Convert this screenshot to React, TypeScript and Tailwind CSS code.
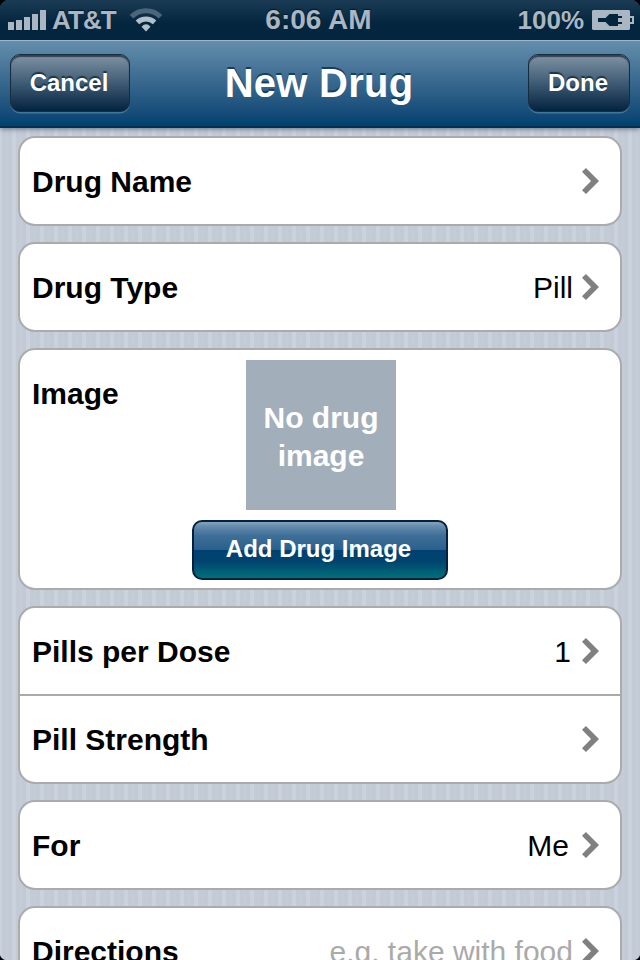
import type { ReactNode } from "react";

function Chevron() {
  return (
    <svg width="18" height="26" viewBox="0 0 18 26" className="ml-2 shrink-0">
      <path d="M1 3.8 L5 0 L18 13 L5 26 L1 22.2 L10 13Z" fill="#808080" />
    </svg>
  );
}

function Card({ children }: { children: ReactNode }) {
  return (
    <section className="w-[604px] shrink-0 divide-y-2 divide-[#ababab] overflow-hidden rounded-[17px] border-2 border-[#ababab] bg-white">
      {children}
    </section>
  );
}

type RowProps = { label: string; value?: string; pad?: string; muted?: boolean };

function Row({ label, value, pad = "", muted }: RowProps) {
  return (
    <div className="flex h-[86px] items-center justify-between pr-[21px] pl-3 not-last:h-[88px]">
      <span className="pt-[2px] text-[30px] leading-[34px] font-bold">{label}</span>
      <div className="flex items-center">
        <span className={`pt-[2px] text-[30px] leading-[34px] ${pad} ${muted ? "text-[#aaaaaa]" : "text-black"}`}>
          {value}
        </span>
        <Chevron />
      </div>
    </div>
  );
}

function BarButton({ children, size }: { children: ReactNode; size: string }) {
  return (
    <button
      className={`${size} h-[58px] rounded-[10px] border border-[#182c3f] bg-linear-to-b from-[#8093a3] via-[#3f5c75] to-[#03233f] pr-[2px] pb-[1px] text-[24px] leading-7 font-bold text-white shadow-[0_1.5px_0_#41769a,inset_0_2px_1px_#33424f] [text-shadow:0_-2px_1px_#1b3346]`}
    >
      {children}
    </button>
  );
}

function Signal() {
  return (
    <svg width="38" height="20" viewBox="0 0 38 20" fill="#aab7c2">
      <path d="M0 12h6v8H0zM8 10h6v10H8zM16 7h6v13h-6zM24 4h6v16h-6zM32 0h6v20h-6z" />
    </svg>
  );
}

function Wifi() {
  return (
    <svg width="32" height="24" viewBox="0 0 32 24" fill="none">
      <path d="M1.5 8.7 A20.5 20.5 0 0 1 30.5 8.7" stroke="#4b667a" strokeWidth="5" />
      <path d="M7.4 14.4 A12.4 12.4 0 0 1 24.6 14.4" stroke="#b4c0c9" strokeWidth="5" />
      <path d="M11.5 18.7 Q16 14 20.5 18.7 L16 23.5Z" fill="#b4c0c9" />
    </svg>
  );
}

function Battery() {
  return (
    <svg width="42" height="20" viewBox="0 0 42 20">
      <path d="M1 0H37L38 1V19L37 20H1L0 19V1Z" fill="#aab7c2" />
      <path d="M38 7h3v6h-3" fill="none" stroke="#aab7c2" strokeWidth="2" />
      <path d="M6 8h7.5l4-4H26v2h4v2h-4v4h4v2h-4v2h-8.5l-4-4H6z" fill="#03263e" />
    </svg>
  );
}

/* Black notches that round off the four corners of the device screen. */
function ScreenCorners() {
  return (
    <svg className="pointer-events-none absolute inset-0 z-20" width="640" height="960" viewBox="0 0 640 960" fill="#000">
      <path d="M0 0H6Q2 2 0 6ZM640 0H634Q638 2 640 6ZM0 960V955Q1 958.5 5 960ZM640 960V955Q639 958.5 635 960Z" />
    </svg>
  );
}

export default function App() {
  return (
    <main className="relative flex h-[960px] w-[640px] flex-col overflow-hidden bg-[#c4cbd7] bg-[repeating-linear-gradient(90deg,#cad2de_0_2px,#c3cbd6_2px_6px,#c5ccd8_6px_8px,#c2cad5_8px_12px,#cad2de_12px_14px)] font-['Liberation_Sans',Arial,sans-serif] text-black">
      <header className="z-10 shrink-0 shadow-[0_1px_5px_#66707c]">
        <div className="grid h-10 grid-cols-[1fr_auto_1fr] items-center bg-linear-to-b from-[#1b3b55] via-[#03263e] via-60% to-[#03263e] px-2 text-[26px] leading-10 font-bold text-[#aab7c2] [text-shadow:0_-1px_1px_#021525]">
          <div className="flex items-center">
            <Signal />
            <span className="ml-1.5 w-[78px] text-[26px] tracking-[-0.9px]">AT&amp;T</span>
            <Wifi />
          </div>
          <span className="-ml-[3px] text-[28px]">6:06 AM</span>
          <div className="-mr-[2px] flex items-center justify-end gap-2">
            <span>100%</span>
            <Battery />
          </div>
        </div>
        <div className="grid h-[88px] grid-cols-[1fr_auto_1fr] items-start border-t border-b-2 border-t-[#9eb7c8] border-b-[#022f50] bg-linear-to-b from-[#648eac] to-[#00416f] px-[10px] pt-[13px]">
          <BarButton size="w-[120px]">Cancel</BarButton>
          <h1 className="-ml-[2px] pt-[6px] text-[40px] leading-[46px] font-bold tracking-[0.25px] text-white [text-shadow:0_-2px_0_#173e5b]">
            New Drug
          </h1>
          <BarButton size="w-[102px] justify-self-end">Done</BarButton>
        </div>
      </header>

      <div className="flex flex-col items-center gap-4 pt-2">
        <Card>
          <Row label="Drug Name" />
        </Card>
        <Card>
          <Row label="Drug Type" value="Pill" />
        </Card>
        <Card>
          <div className="grid h-[238px] grid-cols-[172px_256px_172px]">
            <h2 className="pt-[27px] pl-3 text-[30px] leading-[34px] font-bold">Image</h2>
            <div className="flex flex-col items-center pt-[10px]">
              <div className="ml-[2px] flex h-[150px] w-[150px] items-center justify-center bg-[#a2afba] pt-1 text-center text-[30px] leading-[38px] font-bold text-white">
                No drug
                <br />
                image
              </div>
              <button className="mt-[10px] h-[60px] w-64 rounded-[10px] border-2 border-[#00213f] bg-[linear-gradient(180deg,#86a4bc_0,#648bab_8%,#3f6f98_24%,#28608b_50%,#00416f_50%,#00436f_70%,#007178_100%)] pr-[3px] pb-[2px] text-[24px] leading-7 font-bold text-white">
                Add Drug Image
              </button>
            </div>
          </div>
        </Card>
        <Card>
          <Row label="Pills per Dose" value="1" pad="pr-[2px]" />
          <Row label="Pill Strength" />
        </Card>
        <Card>
          <Row label="For" value="Me" pad="pr-1" />
        </Card>
        <Card>
          <Row label="Directions" value="e.g. take with food" muted />
        </Card>
      </div>
      <ScreenCorners />
    </main>
  );
}
